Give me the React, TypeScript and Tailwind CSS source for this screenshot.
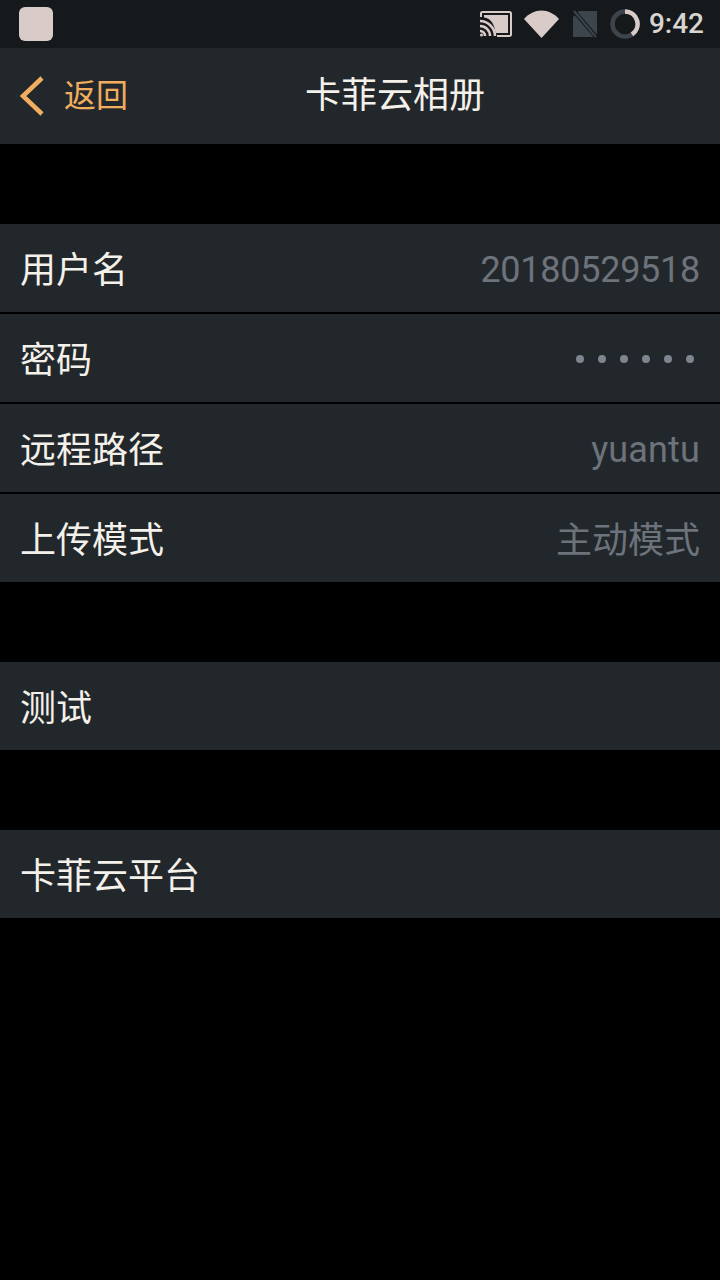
const cjk = "font-['Roboto','Noto_Sans_CJK_SC',sans-serif]";

function Row({ label, value, valueClass, dots }: { label: string; value?: string; valueClass?: string; dots?: boolean }) {
  return (
    <div className="flex h-[88px] items-center justify-between bg-[#22272b] pl-[20px] pr-[20px]">
      <span className="pt-[6px] text-[36px] leading-none text-[#f4f0ea]">{label}</span>
      {value && <span className={`text-[36px] leading-none text-[#6d737b] ${valueClass ?? "pt-[4px]"}`}>{value}</span>}
      {dots && (
        <span className="flex gap-[14px] pr-[6px] pt-[2px]">
          {[0, 1, 2, 3, 4, 5].map((i) => (
            <span key={i} className="h-[8px] w-[8px] rounded-full bg-[#7f858f]" />
          ))}
        </span>
      )}
    </div>
  );
}

export default function App() {
  return (
    <div className={`flex h-[1280px] w-[720px] flex-col overflow-hidden bg-black ${cjk}`}>
      <div className="flex h-[48px] items-center justify-between bg-[#15191c] pl-[19px] pr-[16px]">
        <div className="h-[34px] w-[34px] rounded-[6px] bg-[#d8cbc8]" />
        <div className="flex items-center">
          <svg width="32" height="26" viewBox="0 0 32 26" className="mr-[12px]" fill="none">
            <path d="M1 6V2.500A1.500 1.500 0 0 1 2.500 1h27A1.500 1.500 0 0 1 31 2.500v21a1.500 1.500 0 0 1-1.500 1.500H17" stroke="#d8cbc8" strokeWidth="2" />
            <path d="M4 4h24v18H15.500C14.500 13 11 7.500 4 6.500z" fill="#d8cbc8" />
            <path d="M0 10c8 0 15 7 15 15M0 15c5.500 0 10 4.500 10 10M0 20c2.800 0 5 2.200 5 5" stroke="#d8cbc8" strokeWidth="2.500" />
            <circle cx="1.500" cy="24" r="1.500" fill="#d8cbc8" />
          </svg>
          <svg width="35" height="28" viewBox="0 0 35 28" className="mr-[13px]">
            <path d="M0 9C5 3.500 11 0.500 17.500 0.500S30 3.500 35 9L17.500 28z" fill="#d8cbc8" />
          </svg>
          <svg width="26" height="28" viewBox="0 0 26 28" className="mr-[12px]">
            <path d="M7 1h18v26H1V7z" fill="#3c444c" />
            <path d="M1 0l24 28" stroke="#15191c" strokeWidth="4" />
            <path d="M2 1l22 26" stroke="#3c444c" strokeWidth="2" />
          </svg>
          <svg width="30" height="30" viewBox="0 0 30 30" className="mr-[9px]" fill="none">
            <circle cx="15" cy="15" r="12.500" stroke="#3c444c" strokeWidth="4.500" />
            <path d="M15 2.500A12.500 12.500 0 0 1 22 25.400" stroke="#d8cbc8" strokeWidth="4.500" />
          </svg>
          <span className="font-['Roboto'] text-[28px] font-medium leading-none text-[#d8d4d0]">9:42</span>
        </div>
      </div>

      <div className="relative flex h-[96px] items-center bg-[#22272b] pl-[20px]">
        <svg width="24" height="40" viewBox="0 0 24 40" fill="none">
          <path d="M22 2L3 20l19 18" stroke="#f0ae5e" strokeWidth="4.500" />
        </svg>
        <span className="ml-[20px] text-[32px] leading-none text-[#f0ae5e]">返回</span>
        <span className="absolute left-[305px] text-[36px] leading-none text-[#f4f0ea]">卡菲云相册</span>
      </div>

      <div className="mt-[80px] flex flex-col gap-[2px]">
        <Row label="用户名" value="20180529518" valueClass="pt-[4px] tracking-[-0.27px]" />
        <Row label="密码" dots />
        <Row label="远程路径" value="yuantu" valueClass="pt-[4px] tracking-[0.15px]" />
        <Row label="上传模式" value="主动模式" valueClass="pt-[6px]" />
      </div>

      <div className="mt-[80px]">
        <Row label="测试" />
      </div>
      <div className="mt-[80px]">
        <Row label="卡菲云平台" />
      </div>
    </div>
  );
}
